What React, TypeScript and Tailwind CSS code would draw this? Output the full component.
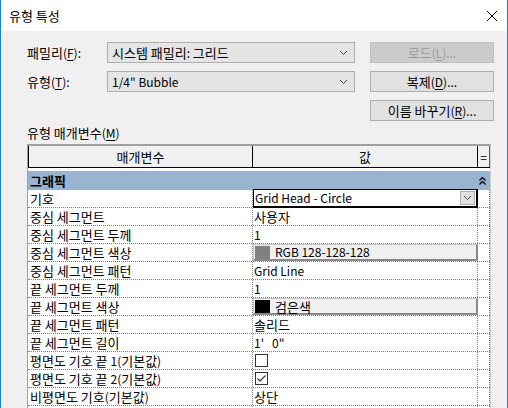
import React from "react";

const F = "font-['Noto_Sans_CJK_KR','Noto_Sans',sans-serif]";

function K({ t }: { t: string }) {
  const parts = t.split(/([\uAC00-\uD7A3]+(?: [\uAC00-\uD7A3]+)* ?)/);
  return (
    <>
      {parts.map((p, i) =>
        /[\uAC00-\uD7A3]/.test(p) ? (
          <span key={i} className="text-[13px]">
            {p}
          </span>
        ) : (
          <React.Fragment key={i}>{p}</React.Fragment>
        )
      )}
    </>
  );
}

function Chevron({ className = "" }: { className?: string }) {
  return (
    <svg width="9" height="6" viewBox="0 0 9 6" className={className}>
      <polyline points="1,1 4.5,4.5 8,1" fill="none" stroke="#404040" strokeWidth="1" />
    </svg>
  );
}

function U({ c }: { c: string }) {
  return <span className="underline underline-offset-2">{c}</span>;
}

function Dropdown({ text }: { text: string }) {
  return (
    <div className="w-[248px] h-[21px] bg-[#e5e5e5] border border-[#adadad] flex items-center pl-[4px] pr-[6px]">
      <span className="flex-1 text-[12px] leading-none text-black">
        <K t={text} />
      </span>
      <Chevron />
    </div>
  );
}

function Btn({ children, disabled }: { children: React.ReactNode; disabled?: boolean }) {
  return (
    <div
      className={
        "w-[124px] h-[21px] border flex items-center justify-center text-[12px] leading-none " +
        (disabled ? "bg-[#cccccc] border-[#bfbfbf] text-[#9a9a9a]" : "bg-[#e1e1e1] border-[#adadad] text-black")
      }
    >
      {children}
    </div>
  );
}

type Row = { label: string; kind: "text" | "combo" | "color" | "check"; value?: string; swatch?: string; checked?: boolean };

const rows: Row[] = [
  { label: "기호", kind: "combo", value: "Grid Head - Circle" },
  { label: "중심 세그먼트", kind: "text", value: "사용자" },
  { label: "중심 세그먼트 두께", kind: "text", value: "1" },
  { label: "중심 세그먼트 색상", kind: "color", value: "RGB 128-128-128", swatch: "#808080" },
  { label: "중심 세그먼트 패턴", kind: "text", value: "Grid Line" },
  { label: "끝 세그먼트 두께", kind: "text", value: "1" },
  { label: "끝 세그먼트 색상", kind: "color", value: "검은색", swatch: "#000000" },
  { label: "끝 세그먼트 패턴", kind: "text", value: "솔리드" },
  { label: "끝 세그먼트 길이", kind: "text", value: "1'\u00a0\u00a0 0\"" },
  { label: "평면도 기호 끝 1(기본값)", kind: "check", checked: false },
  { label: "평면도 기호 끝 2(기본값)", kind: "check", checked: true },
  { label: "비평면도 기호(기본값)", kind: "text", value: "상단" },
  { label: "", kind: "text", value: "" },
];

function ValueCell({ r }: { r: Row }) {
  if (r.kind === "combo") {
    return (
      <div className="relative w-[225px] h-full border-r border-dotted border-[#808080]">
        <div className="absolute left-[0px] top-[-1px] w-[225px] h-[19px] border border-black border-b-2 border-r-2 bg-white flex items-center pl-[1px] pr-[1px]">
          <span className="flex-1 text-[12px] leading-none">{r.value}</span>
          <div className="w-[15px] h-[14px] bg-[#e1e1e1] border border-[#adadad] flex items-center justify-center">
            <Chevron />
          </div>
        </div>
      </div>
    );
  }
  if (r.kind === "color") {
    return (
      <div className="w-[225px] h-full border-r border-dotted border-[#808080] relative">
        <div className="absolute left-[0px] top-[0px] w-[225px] h-[17px] bg-[#f0f0f0] border-t border-l border-[#c8c8c8] border-r-2 border-b-2 border-r-[#8a8a8a] border-b-[#8a8a8a] flex items-center gap-[5px] pl-[1px]">
          <div className="w-[15px] h-[13px]" style={{ background: r.swatch }} />
          <span className="text-[12px] leading-none">
            <K t={r.value || ""} />
          </span>
        </div>
      </div>
    );
  }
  if (r.kind === "check") {
    return (
      <div className="w-[225px] h-full border-r border-dotted border-[#808080] flex items-center pl-[2px]">
        <div className="w-[13px] h-[13px] border border-[#333333] bg-white flex items-center justify-center">
          {r.checked && (
            <svg width="11" height="11" viewBox="0 0 11 11">
              <polyline points="1.5,5.5 4,8 9.5,2.5" fill="none" stroke="#333333" strokeWidth="1.2" />
            </svg>
          )}
        </div>
      </div>
    );
  }
  return (
    <div className="w-[225px] h-full border-r border-dotted border-[#808080] flex items-center pl-[1px] text-[12px] leading-none">
      <K t={r.value || ""} />
    </div>
  );
}

export default function App() {
  return (
    <div className={"w-[508px] h-[408px] overflow-hidden flex flex-col border-l border-r border-[#1883d7] text-black " + F}>
      <div className="h-[31px] bg-white flex items-center pl-[8px] pr-[9px] shrink-0">
        <span className="flex-1 text-[12px] leading-none">
          <K t="유형 특성" />
        </span>
        <svg width="12" height="12" viewBox="0 0 12 12">
          <path d="M1 1 L11 11 M11 1 L1 11" stroke="#000" strokeWidth="1" />
        </svg>
      </div>
      <div className="flex-1 bg-[#f0f0f0] pl-[26px] pt-[11px] flex flex-col">
        <div className="flex items-center h-[21px]">
          <div className="w-[80px] text-[12px] leading-none">
            <K t="패밀리" />(<U c="F" />):
          </div>
          <Dropdown text="시스템 패밀리: 그리드" />
          <div className="ml-[15px]">
            <Btn disabled>
              <K t="로드" />(<U c="L" />)...
            </Btn>
          </div>
        </div>
        <div className="flex items-center h-[21px] mt-[8px]">
          <div className="w-[80px] text-[12px] leading-none">
            <K t="유형" />(<U c="T" />):
          </div>
          <Dropdown text={'1/4" Bubble'} />
          <div className="ml-[15px]">
            <Btn>
              <K t="복제" />(<U c="D" />)...
            </Btn>
          </div>
        </div>
        <div className="flex items-center h-[21px] mt-[8px]">
          <div className="w-[328px]" />
          <div className="ml-[15px]">
            <Btn>
              <K t="이름 바꾸기" />(<U c="R" />)...
            </Btn>
          </div>
        </div>
        <div className="h-[23px] flex items-center text-[12px] leading-none">
          <span>
            <K t="유형 매개변수" />(<U c="M" />)
          </span>
        </div>
        <div className="w-[464px] flex-1 bg-white border-t-2 border-[#a0a0a0] border-l border-r border-l-[#a0a0a0] border-r-[#d0d0d0] flex flex-col">
          <div className="h-[22px] flex bg-[#f0f0f0] border-b border-black shrink-0">
            <div className="w-[225px] border-r border-l border-black flex items-center justify-center text-[12px] leading-none">
              <K t="매개변수" />
            </div>
            <div className="w-[225px] border-r border-black flex items-center justify-center text-[12px] leading-none">
              <K t="값" />
            </div>
            <div className="w-[12px] border-r border-[#606060] flex items-center justify-center text-[12px] leading-none">=</div>
          </div>
          <div className="h-[3px] shrink-0" />
          <div className="h-[19px] bg-[#99b4d1] flex items-center pl-[2px] pr-[4px] shrink-0">
            <span className="flex-1 text-[12px] font-bold leading-none">
              <K t="그래픽" />
            </span>
            <svg width="7" height="8" viewBox="0 0 7 8">
              <polyline points="0.5,3.5 3.5,0.5 6.5,3.5" fill="none" stroke="#000" strokeWidth="1.3" />
              <polyline points="0.5,7.5 3.5,4.5 6.5,7.5" fill="none" stroke="#000" strokeWidth="1.3" />
            </svg>
          </div>
          {rows.map((r, i) => (
            <div key={i} className="h-[18px] flex border-b border-dotted border-[#808080] shrink-0">
              <div className="w-[225px] h-full border-r border-dotted border-[#808080] flex items-center pl-[2px] text-[12px] leading-none whitespace-pre">
                <K t={r.label} />
              </div>
              <ValueCell r={r} />
              <div className="w-[12px] h-full border-r border-dotted border-[#808080]" />
            </div>
          ))}
        </div>
      </div>
    </div>
  );
}
